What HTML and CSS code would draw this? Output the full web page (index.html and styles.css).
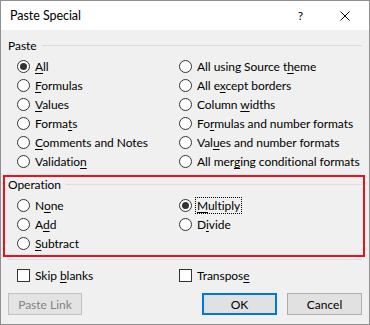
FILE: index.html
```html
<!DOCTYPE html>
<html>
<head>
<meta charset="utf-8">
<link rel="stylesheet" href="styles.css">
</head>
<body>
<div class="window">
  <div class="titlebar">
    <span class="title">Paste Special</span>
    <span class="help">?</span>
    <svg class="close" width="10" height="10" viewBox="0 0 10 10"><path d="M0.5 0.5 L9.5 9.5 M9.5 0.5 L0.5 9.5" stroke="#000" stroke-width="1" fill="none"/></svg>
  </div>
  <div class="content">
    <div class="group-head"><span>Paste</span></div>
    <div class="options">
      <label class="opt"><span class="radio checked"></span><span><u>A</u>ll</span></label>
      <label class="opt"><span class="radio"></span><span>All using Source t<u>h</u>eme</span></label>
      <label class="opt"><span class="radio"></span><span><u>F</u>ormulas</span></label>
      <label class="opt"><span class="radio"></span><span>All e<u>x</u>cept borders</span></label>
      <label class="opt"><span class="radio"></span><span><u>V</u>alues</span></label>
      <label class="opt"><span class="radio"></span><span>Column <u>w</u>idths</span></label>
      <label class="opt"><span class="radio"></span><span>Forma<u>t</u>s</span></label>
      <label class="opt"><span class="radio"></span><span>Fo<u>r</u>mulas and number formats</span></label>
      <label class="opt"><span class="radio"></span><span><u>C</u>omments and Notes</span></label>
      <label class="opt"><span class="radio"></span><span>Val<u>u</u>es and number formats</span></label>
      <label class="opt"><span class="radio"></span><span>Validatio<u>n</u></span></label>
      <label class="opt"><span class="radio"></span><span>All mer<u>g</u>ing conditional formats</span></label>
    </div>
    <div class="group-head op-head"><span>Operation</span></div>
    <div class="options op-options">
      <label class="opt"><span class="radio"></span><span>N<u>o</u>ne</span></label>
      <label class="opt"><span class="radio checked"></span><span class="focus"><u>M</u>ultiply</span></label>
      <label class="opt"><span class="radio"></span><span>A<u>d</u>d</span></label>
      <label class="opt"><span class="radio"></span><span>D<u>i</u>vide</span></label>
      <label class="opt"><span class="radio"></span><span><u>S</u>ubtract</span></label>
    </div>
    <div class="separator"></div>
    <div class="options checks">
      <label class="opt"><span class="check"></span><span>Skip <u>b</u>lanks</span></label>
      <label class="opt"><span class="check"></span><span>Transpos<u>e</u></span></label>
    </div>
    <div class="buttons">
      <button class="btn disabled">Paste Link</button>
      <span class="spacer"></span>
      <button class="btn default">OK</button>
      <button class="btn">Cancel</button>
    </div>
  </div>
  <div class="highlight"></div>
</div>
</body>
</html>
```

FILE: styles.css
```css
html, body {
  margin: 0;
  padding: 0;
  background: #ffffff;
}
body {
  font-family: Lato, "Noto Sans", sans-serif;
  font-size: 12px;
  letter-spacing: -0.05px;
  color: #000;
}
.window {
  position: relative;
  width: 370px;
  height: 325px;
  box-sizing: border-box;
  border: 1px solid #8f8f8f;
  background: #f0f0f0;
}
.titlebar {
  height: 29px;
  background: #ffffff;
  display: flex;
  align-items: center;
  padding-left: 9px;
}
.title {
  flex: 1;
  font-size: 12.5px;
  line-height: 16px;
}
.help {
  margin-right: 37px;
}
.close {
  margin-right: 19px;
}
.content {
  padding-top: 7px;
}
.group-head {
  display: flex;
  align-items: center;
  height: 16px;
  padding-left: 7px;
  padding-right: 7px;
}
.group-head::after {
  content: "";
  flex: 1;
  height: 1px;
  background: #dcdcdc;
  margin-left: 5px;
}
.options {
  display: grid;
  grid-template-columns: 162px 1fr;
  grid-auto-rows: 19px;
  padding-left: 16px;
  margin-top: 4px;
}
.op-head {
  margin-top: 5px;
}
.opt {
  display: flex;
  align-items: center;
  gap: 5px;
  white-space: nowrap;
}
.radio {
  width: 13px;
  height: 13px;
  box-sizing: border-box;
  border: 1px solid #333;
  border-radius: 50%;
  background: #fff;
  display: flex;
  align-items: center;
  justify-content: center;
  flex: none;
}
.radio.checked::after {
  content: "";
  width: 7px;
  height: 7px;
  border-radius: 50%;
  background: #333;
}
.check {
  width: 13px;
  height: 13px;
  box-sizing: border-box;
  border: 1px solid #333;
  background: #fff;
  flex: none;
}
.focus {
  outline: 1px dotted #000;
  outline-offset: 0;
  padding: 0 1px;
  margin-left: -1px;
  line-height: 15px;
}
u {
  text-decoration-thickness: 1px;
  text-underline-offset: 2px;
}
.separator {
  height: 1px;
  background: #dcdcdc;
  margin: 6px 7px 0 7px;
}
.checks {
  margin-top: 6px;
}
.buttons {
  display: flex;
  align-items: center;
  gap: 10px;
  padding: 0 7px 0 7px;
  margin-top: 8px;
}
.spacer {
  flex: 1;
}
.btn {
  width: 75px;
  height: 22px;
  box-sizing: border-box;
  border: 1px solid #adadad;
  background: #e1e1e1;
  font-family: inherit;
  font-size: 12px;
  color: #000;
  padding: 0;
}
.btn.default {
  border: 2px solid #0078d7;
}
.btn.disabled {
  color: #838383;
  background: #e3e3e3;
  border-color: #bfbfbf;
  width: 74px;
}
.highlight {
  position: absolute;
  left: 2px;
  top: 174px;
  width: 362px;
  height: 82px;
  box-sizing: border-box;
  border: 2px solid #e81123;
  pointer-events: none;
}
```
